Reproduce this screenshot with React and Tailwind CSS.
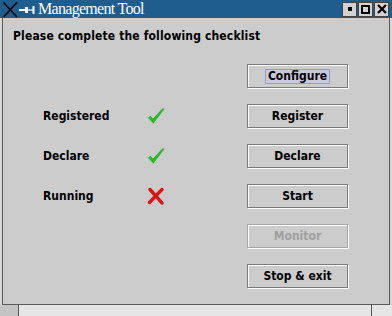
import React from 'react';

const sans = { fontFamily: '"DejaVu Sans Condensed", "DejaVu Sans", sans-serif' };

function Check() {
  return (
    <svg width="18" height="18" viewBox="0 0 18 18">
      <path
        d="M1.5 10.8 L3.4 9.2 L6 12 L15.8 1.4 L16.8 2.3 L6.3 16.2 Z"
        fill="#22c322"
        stroke="#12961a"
        strokeWidth="0.5"
        strokeLinejoin="round"
      />
    </svg>
  );
}

function Cross() {
  return (
    <svg width="18" height="18" viewBox="0 0 18 18">
      <path d="M3 2.5 Q9 9 15 16" stroke="#d81414" strokeWidth="3.4" fill="none" strokeLinecap="round" />
      <path d="M15 2.5 Q9 8.5 2.5 15.5" stroke="#d81414" strokeWidth="3.4" fill="none" strokeLinecap="round" />
    </svg>
  );
}

function Button({ label, focused, disabled }) {
  return (
    <div
      className={
        'w-[101px] h-[24px] flex items-center justify-center border bg-[#cccccc] shadow-[inset_1px_1px_0_#ffffff,1px_1px_0_#ffffff] ' +
        (disabled ? 'border-[#a6a6a6]' : 'border-[#7a7a7a]')
      }
    >
      <span
        className={
          'text-[12px] font-bold leading-[13px] px-[2px] ' +
          (focused ? 'bg-[#c9c9dc] border border-[#9b9bc9] ' : 'border border-transparent ') +
          (disabled ? 'text-[#a0a0a0]' : 'text-black')
        }
        style={sans}
      >
        {label}
      </span>
    </div>
  );
}

function Row({ label, status, children }) {
  return (
    <div className="h-[24px] flex items-center pl-[40px] pr-[41px]">
      <div className="w-[104px] text-[12px] font-bold text-black" style={sans}>
        {label}
      </div>
      <div className="w-[18px] flex items-center">
        {status === 'ok' && <Check />}
        {status === 'fail' && <Cross />}
      </div>
      <div className="flex-1" />
      {children}
    </div>
  );
}

export default function App() {
  return (
    <div className="w-[392px] h-[316px] bg-[#d8d8d8] flex flex-col overflow-hidden">
      {/* title bar */}
      <div className="h-[18px] shrink-0 flex items-center bg-[#1e5d8d]">
        <svg width="34" height="17" viewBox="0 0 34 17" className="ml-[2px]">
          <path d="M1.5 1.5 L15 16 M15 1.5 L1.5 16" stroke="#000" strokeWidth="1.7" />
          <path d="M17 9 H23" stroke="#fff" strokeWidth="2" />
          <rect x="23" y="6" width="3" height="6" fill="#fff" />
          <path d="M26 9 H31" stroke="#fff" strokeWidth="1.2" />
          <rect x="30.5" y="5" width="2" height="8" fill="#fff" />
        </svg>
        <span
          className="ml-[2px] text-white text-[16px] leading-none tracking-[-0.7px]"
          style={{ fontFamily: '"Liberation Serif", serif' }}
        >
          Management Tool
        </span>
        <div className="ml-auto mr-[3px] flex gap-[1px]">
          <div className="w-[15px] h-[15px] bg-[#d2d2d2] border border-[#444] flex items-center justify-center">
            <div className="w-[4px] h-[4px] bg-black" />
          </div>
          <div className="w-[15px] h-[15px] bg-[#d2d2d2] border border-[#444] flex items-center justify-center">
            <div className="w-[9px] h-[9px] border-2 border-black" />
          </div>
          <div className="w-[15px] h-[15px] bg-[#d2d2d2] border border-[#444] flex items-center justify-center">
            <svg width="10" height="10" viewBox="0 0 10 10">
              <path d="M1 1 L9 9 M9 1 L1 9" stroke="#000" strokeWidth="2.2" />
            </svg>
          </div>
        </div>
      </div>

      {/* window body */}
      <div className="h-[287px] shrink-0 mx-[2px] border-l border-r border-b border-[#5a5a5a] bg-[#cccccc]">
        <div
          className="pt-[10px] pl-[10px] text-[12px] font-bold leading-[16px] tracking-[0.15px] text-black"
          style={sans}
        >
          Please complete the following checklist
        </div>
        <div className="mt-[20px] flex flex-col gap-[16px]">
          <Row>
            <Button label="Configure" focused />
          </Row>
          <Row label="Registered" status="ok">
            <Button label="Register" />
          </Row>
          <Row label="Declare" status="ok">
            <Button label="Declare" />
          </Row>
          <Row label="Running" status="fail">
            <Button label="Start" />
          </Row>
          <Row>
            <Button label="Monitor" disabled />
          </Row>
          <Row>
            <Button label="Stop &amp; exit" />
          </Row>
        </div>
      </div>

      {/* strip below */}
      <div className="flex-1 flex bg-[#e6e6e6]">
        <div className="w-[19px] border-r border-[#555] bg-[#c4c4c4]" />
        <div className="flex-1 border-r border-[#555]" />
        <div className="w-[20px]" />
      </div>
    </div>
  );
}
